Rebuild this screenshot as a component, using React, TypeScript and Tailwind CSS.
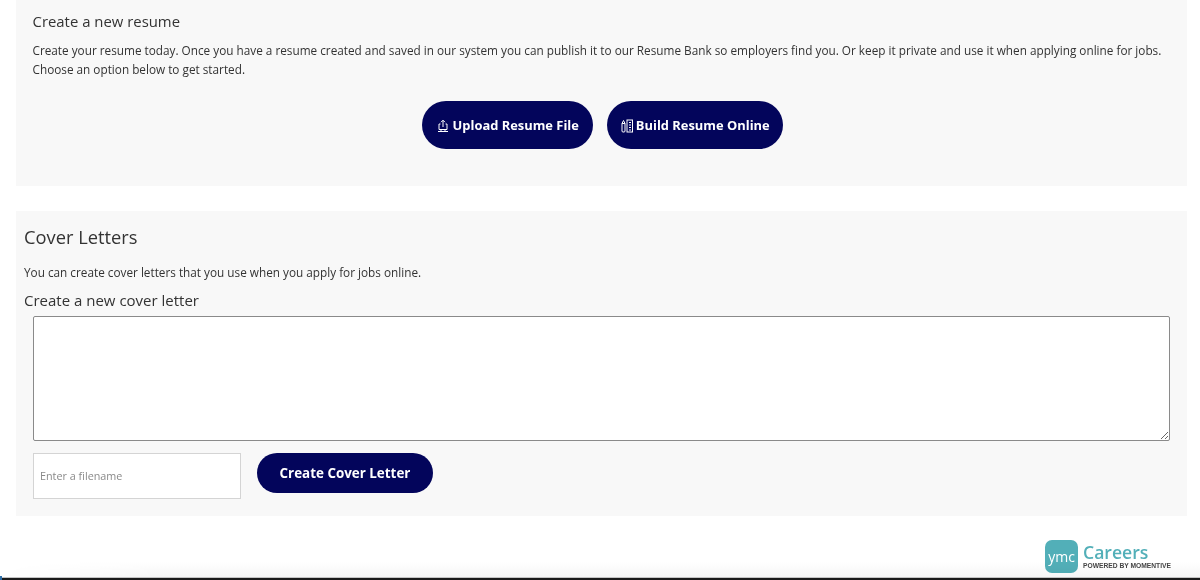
export default function App() {
  return (
    <div className="relative flex h-[580px] w-[1200px] flex-col overflow-hidden bg-white font-['Open_Sans',sans-serif] text-[#333333]">
      <section className="ml-4 flex h-[186px] w-[1171px] flex-col bg-[#f8f8f8] pl-[16.5px] pt-[12px]">
        <h2 className="text-[14.9px] leading-[18px]">Create a new resume</h2>
        <p className="mt-[11px] w-[1140px] text-[11.78px] leading-[18.5px]">
          Create your resume today. Once you have a resume created and saved in our system you can publish it to our Resume Bank so employers find you. Or keep it private and use it when applying online for jobs. Choose an option below to get started.
        </p>
        <div className="mt-[23px] flex justify-center gap-[14px] pr-[14px]">
          <button className="flex h-[48px] w-[171px] items-center justify-center gap-[4px] rounded-[24px] bg-[#03055b] pt-[1px] text-[12.9px] font-bold text-white">
            <svg width="12" height="14" viewBox="0 0 12 14" fill="none" stroke="white" strokeWidth="1">
              <path d="M6 8V1.5M4 3.2 6 1.2l2 2" />
              <path d="M3.5 5H2v5.5h8V5H8.5" />
              <path d="M1 12.5h10M4 10.5v2M8 10.5v2" />
            </svg>
            Upload Resume File
          </button>
          <button className="flex h-[48px] w-[176px] items-center justify-center gap-[3px] rounded-[24px] bg-[#03055b] pt-[1px] text-[12.9px] font-bold text-white">
            <svg width="12" height="14" viewBox="0 0 12 14" fill="none" stroke="white" strokeWidth="1">
              <path d="M1 4.5h3v7.5a1 1 0 0 1-1 1H2a1 1 0 0 1-1-1zM2.5 1.5 4 4.5H1z" />
              <rect x="6" y="1" width="5.5" height="12" />
              <path d="M8 3.5h2M8 6h2M8 8.5h2M8 11h2" />
            </svg>
            Build Resume Online
          </button>
        </div>
      </section>
      <section className="ml-4 mt-[25px] flex h-[305px] w-[1171px] flex-col bg-[#f8f8f8] pl-2 pt-[14px]">
        <h2 className="text-[18.3px] leading-[24px]">Cover Letters</h2>
        <p className="mt-[14px] text-[11.78px] leading-[18px]">You can create cover letters that you use when you apply for jobs online.</p>
        <h3 className="mt-[9px] text-[15px] leading-[20px]">Create a new cover letter</h3>
        <div className="ml-[9px] mt-[6px] flex w-[1137px] flex-col">
          <textarea className="block h-[125px] w-full rounded-[2px] border border-[#8a8a8a] bg-white" />
          <div className="mt-3 flex items-start gap-[16px]">
            <input placeholder="Enter a filename" className="h-[46px] w-[208px] border border-[#d4d4d4] bg-white pb-[1px] pl-[6px] pr-[7px] text-[10.8px] text-[#333333] placeholder:text-[#8a8a8a]" />
            <button className="h-[40px] w-[176px] rounded-[20px] bg-[#03055b] text-[13.4px] font-bold text-white">Create Cover Letter</button>
          </div>
        </div>
      </section>
      <div className="mr-[30px] mt-[24px] flex items-center justify-end gap-[5px]">
        <div className="flex h-[33px] w-[33px] items-center justify-center rounded-[7px] bg-[#52afb8] text-[14px] text-white">ymc</div>
        <div className="flex w-[87px] flex-col">
          <span className="-mt-[1px] text-[17.6px] font-semibold leading-[20px] text-[#52afb8]">Careers</span>
          <span className="whitespace-nowrap font-['Liberation_Sans',sans-serif] text-[6.7px] font-bold leading-[8px] text-[#444444]">POWERED BY MOMENTIVE</span>
        </div>
      </div>
      <div className="absolute bottom-[2px] left-0 right-0 h-[16px] bg-gradient-to-b from-white to-[#f5f5f5] mix-blend-multiply [mask-image:linear-gradient(to_right,transparent,black_160px)]" />
      <div className="absolute bottom-[2px] left-0 h-[1px] w-full bg-[#c4c4c4]" />
      <div className="absolute bottom-0 left-0 h-[2px] w-full bg-[#1a1a1a]" />
      <div className="absolute bottom-0 left-0 h-[4px] w-[2px] bg-[#2f6fa8]" />
    </div>
  );
}
